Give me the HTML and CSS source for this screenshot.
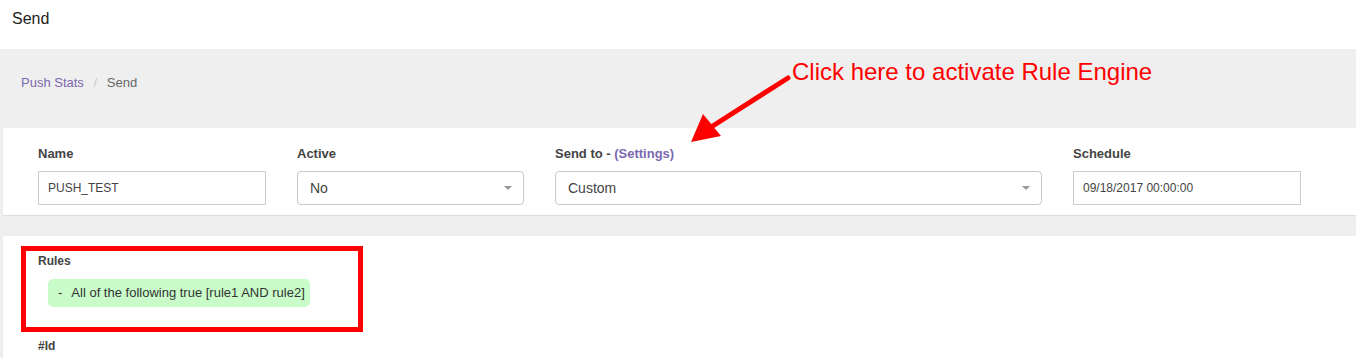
FILE: index.html
```html
<!DOCTYPE html>
<html lang="en">
<head>
    <meta charset="UTF-8">
    <meta name="viewport" content="width=device-width, initial-scale=1.0">
    <title>Send</title>
    <link rel="stylesheet" href="styles.css">
</head>
<body>
    <header class="page-header">
        <h1>Send</h1>
    </header>
    <div class="content">
        <div class="breadcrumb">
            <a href="#">Push Stats</a>
            <span class="sep">/</span>
            <span class="current">Send</span>
        </div>

        <div class="note">
            <span class="note-text">Click here to activate Rule Engine</span>
            <svg class="note-arrow" width="110" height="75" viewBox="0 0 110 75">
                <line x1="105" y1="4" x2="25" y2="55" stroke="#ff0000" stroke-width="5" stroke-linecap="round"/>
                <polygon points="8,68 20,40 38,62" fill="#ff0000"/>
            </svg>
        </div>

        <div class="card form-card">
            <div class="field">
                <label for="name">Name</label>
                <input type="text" id="name" class="text-input" value="PUSH_TEST">
            </div>
            <div class="field">
                <label>Active</label>
                <div class="select">No<span class="caret"></span></div>
            </div>
            <div class="field">
                <label>Send to - <a href="#">(Settings)</a></label>
                <div class="select">Custom<span class="caret"></span></div>
            </div>
            <div class="field">
                <label for="schedule">Schedule</label>
                <input type="text" id="schedule" class="text-input" value="09/18/2017 00:00:00">
            </div>
        </div>

        <div class="card rules-card">
            <div class="rules-box">
                <label>Rules</label>
                <div class="rule-pill"><span class="dash">-</span>All of the following true [rule1 AND rule2]</div>
            </div>
            <label class="id-label">#Id</label>
        </div>
    </div>
</body>
</html>
```

FILE: styles.css
```css
body {
    font-family: "Liberation Sans", Arial, sans-serif;
    margin: 0;
    padding: 0;
    background: #efefef;
    color: #333;
}
.page-header {
    background: #fff;
    height: 49px;
    padding-left: 12px;
}
.page-header h1 {
    margin: 0;
    font-size: 16px;
    font-weight: normal;
    line-height: 37px;
    color: #222;
}
.content {
    position: relative;
    padding: 0 0 0 3px;
}
.breadcrumb {
    padding: 26px 0 0 18px;
    height: 53px;
    font-size: 13px;
    line-height: 16px;
    color: #666;
}
.breadcrumb a {
    color: #7b68b0;
    text-decoration: none;
}
.breadcrumb .sep {
    color: #c8c8c8;
    margin: 0 6px;
}
.note {
    position: absolute;
    left: 683px;
    top: 11px;
}
.note-text {
    position: absolute;
    left: 109px;
    top: -2px;
    white-space: nowrap;
    color: #ff0000;
    font-size: 24px;
    line-height: 28px;
}
.note-arrow {
    position: absolute;
    left: 0;
    top: 14px;
}
.card {
    background: #fff;
    box-shadow: 0 1px 1px rgba(0, 0, 0, 0.08);
}
.form-card {
    display: grid;
    grid-template-columns: 228px 227px 487px 228px;
    column-gap: 31px;
    padding: 18px 0 10px 35px;
    height: 59px;
}
.field label {
    display: block;
    font-size: 13px;
    font-weight: bold;
    color: #444;
    line-height: 16px;
    margin-bottom: 9px;
}
.field label a {
    color: #7b68b0;
    text-decoration: none;
}
.text-input {
    box-sizing: border-box;
    width: 100%;
    height: 34px;
    border: 1px solid #ccc;
    border-radius: 0;
    padding: 0 9px;
    font-family: "Liberation Sans", Arial, sans-serif;
    font-size: 12px;
    color: #444;
    outline: none;
}
.select {
    position: relative;
    box-sizing: border-box;
    height: 34px;
    border: 1px solid #c8c8c8;
    border-radius: 4px;
    padding: 0 12px;
    font-size: 14px;
    line-height: 32px;
    color: #444;
}
.caret {
    position: absolute;
    right: 11px;
    top: 14px;
    width: 0;
    height: 0;
    border-left: 4px solid transparent;
    border-right: 4px solid transparent;
    border-top: 4px solid #999;
}
.rules-card {
    margin-top: 21px;
    padding: 10px 0 4px 18px;
    height: 108px;
}
.rules-box {
    width: 320px;
    height: 76px;
    border: 5px solid #ff0000;
    padding: 0 0 0 12px;
}
.rules-box label,
.id-label {
    display: block;
    font-size: 12px;
    font-weight: bold;
    color: #444;
    line-height: 16px;
}
.rules-box label {
    padding-top: 2px;
}
.rule-pill {
    display: inline-block;
    margin: 10px 0 0 10px;
    padding: 0 5px 0 10px;
    height: 28px;
    line-height: 28px;
    background: #c9fcc9;
    border-radius: 5px;
    font-size: 13px;
    color: #333;
}
.rule-pill .dash {
    margin-right: 9px;
}
.id-label {
    margin: 6px 0 0 17px;
}
```
